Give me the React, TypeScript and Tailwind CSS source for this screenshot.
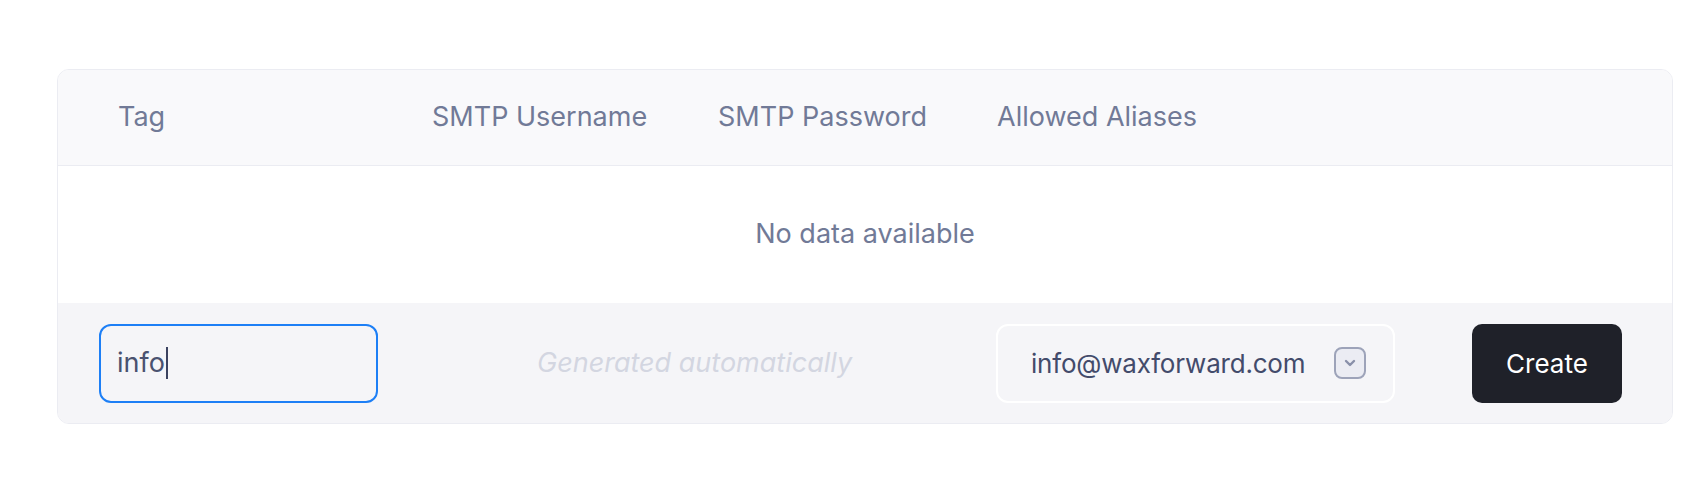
import React from "react";

export default function App() {
  return (
    <div
      className="w-[1700px] h-[478px] bg-white pt-[69px] pl-[57px]"
      style={{ fontFamily: "Inter, 'Noto Sans', sans-serif" }}
    >
      <div className="w-[1616px] rounded-[12px] border border-[#ebecf2] overflow-hidden">
        {/* header */}
        <div className="grid grid-cols-[374px_286px_279px_1fr] items-center h-[96px] bg-[#f9f9fb] border-b border-[#ebecf2] text-[27px] text-[#717a97]">
          <div className="pl-[60px]">Tag</div>
          <div>SMTP Username</div>
          <div>SMTP Password</div>
          <div>Allowed Aliases</div>
        </div>
        {/* body */}
        <div className="h-[137px] bg-white flex items-center justify-center text-[27px] text-[#717a97]">
          No data available
        </div>
        {/* footer */}
        <div className="h-[120px] bg-[#f5f5f8] flex items-center pl-[41px]">
          <div className="w-[279px] h-[79px] rounded-[12px] border-2 border-[#1d7ff6] flex items-center pl-[16px] text-[27px] text-[#4a5270]">
            <span>info</span>
            <span className="inline-block w-[2px] h-[32px] bg-[#3b4260] ml-[1px]" />
          </div>
          <div className="w-[618px] pl-[159px] text-[27px] italic text-[#d3d6e1]">
            Generated automatically
          </div>
          <div className="w-[399px] h-[79px] rounded-[12px] border-2 border-white flex items-center pl-[33px] pr-[27px] justify-between">
            <span className="text-[26px] text-[#434b6b] tracking-[-0.2px]">info@waxforward.com</span>
            <span className="w-[32px] h-[32px] rounded-[8px] border-2 border-[#9da3b9] bg-[#ebecf3] flex items-center justify-center">
              <svg width="16" height="12" viewBox="0 0 16 12" fill="none">
                <path d="M4 4 L8 8 L12 4" stroke="#8990a9" strokeWidth="2.4" strokeLinecap="round" strokeLinejoin="round" />
              </svg>
            </span>
          </div>
          <button className="ml-[77px] w-[150px] h-[79px] rounded-[10px] bg-[#1f2129] text-white text-[26px] flex items-center justify-center">
            Create
          </button>
        </div>
      </div>
    </div>
  );
}
